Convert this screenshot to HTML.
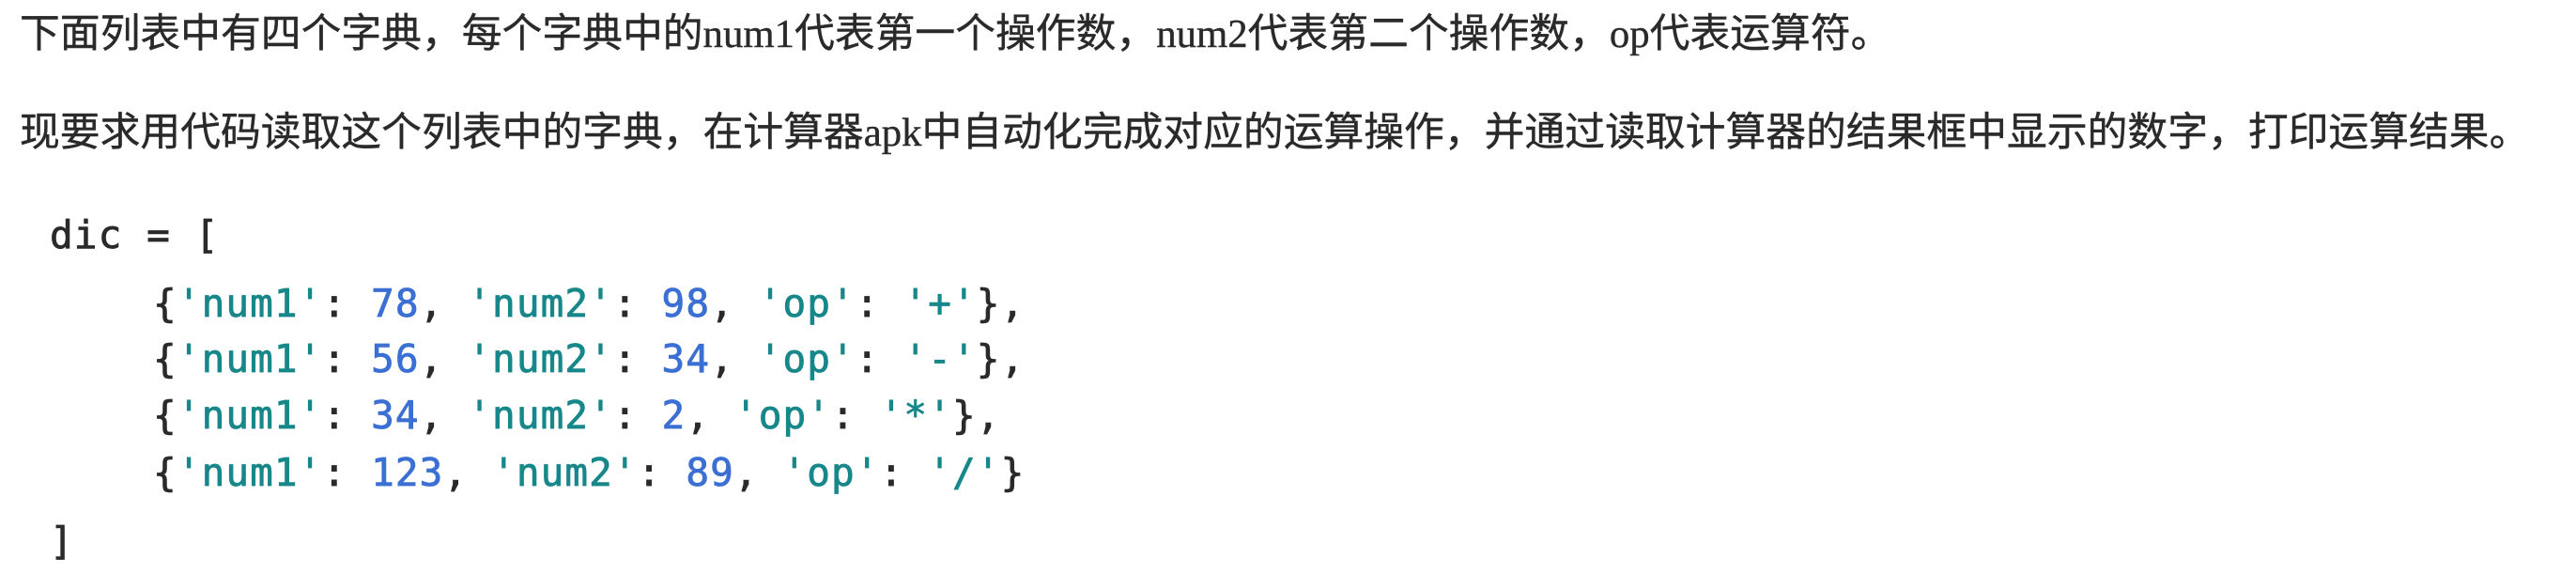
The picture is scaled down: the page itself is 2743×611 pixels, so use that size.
<!DOCTYPE html>
<html><head><meta charset="utf-8"><style>
body{margin:0;width:2743px;height:611px;background:#fff;overflow:hidden;position:relative}
.t{position:absolute;left:21px;font-family:"Liberation Serif","Noto Sans CJK SC",serif;font-size:42.8px;color:#2a2a2a;white-space:nowrap;line-height:1;-webkit-text-stroke:0.4px #2a2a2a}
.c{position:absolute;font-family:"DejaVu Sans Mono","Liberation Mono",monospace;font-size:41px;color:#2a2a2a;white-space:pre;line-height:1;letter-spacing:1.1px;-webkit-text-stroke:0.8px currentColor}
.k{color:#17878a}.n{color:#3b6fd3}
</style></head><body>
<div class="t" style="top:16px">下面列表中有四个字典，每个字典中的num1代表第一个操作数，num2代表第二个操作数，op代表运算符。</div>
<div class="t" style="top:121px">现要求用代码读取这个列表中的字典，在计算器apk中自动化完成对应的运算操作，并通过读取计算器的结果框中显示的数字，打印运算结果。</div>
<div class="c" style="left:53px;top:230px">dic = [</div>
<div class="c" style="left:163px;top:303px">{<span class="k">'num1'</span>: <span class="n">78</span>, <span class="k">'num2'</span>: <span class="n">98</span>, <span class="k">'op'</span>: <span class="k">'+'</span>},</div>
<div class="c" style="left:163px;top:362px">{<span class="k">'num1'</span>: <span class="n">56</span>, <span class="k">'num2'</span>: <span class="n">34</span>, <span class="k">'op'</span>: <span class="k">'-'</span>},</div>
<div class="c" style="left:163px;top:422px">{<span class="k">'num1'</span>: <span class="n">34</span>, <span class="k">'num2'</span>: <span class="n">2</span>, <span class="k">'op'</span>: <span class="k">'*'</span>},</div>
<div class="c" style="left:163px;top:483px">{<span class="k">'num1'</span>: <span class="n">123</span>, <span class="k">'num2'</span>: <span class="n">89</span>, <span class="k">'op'</span>: <span class="k">'/'</span>}</div>
<div class="c" style="left:53px;top:556px">]</div>
</body></html>
